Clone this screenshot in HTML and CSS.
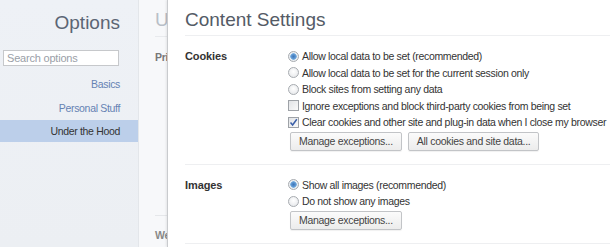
FILE: index.html
```html
<!DOCTYPE html>
<html>
<head>
<meta charset="utf-8">
<link rel="stylesheet" href="styles.css">
</head>
<body>
<div class="sidebar">
  <h1 class="side-title">Options</h1>
  <div class="search"><input class="search-input" type="text" placeholder="Search options"></div>
  <ul class="nav">
    <li class="nav-item">Basics</li>
    <li class="nav-item">Personal Stuff</li>
    <li class="nav-item selected">Under the Hood</li>
  </ul>
</div>
<div class="page">
  <div class="behind">
    <h2 class="behind-title">Under the Hood</h2>
    <div class="behind-label">Privacy</div>
    <div class="behind-spacer"></div>
    <div class="behind-label bottom">Web Content</div>
  </div>
  <div class="overlay">
    <h2 class="title">Content Settings</h2>
    <section class="section">
      <div class="label">Cookies</div>
      <div class="options">
        <label class="opt"><span class="radio checked"></span>Allow local data to be set (recommended)</label>
        <label class="opt"><span class="radio"></span>Allow local data to be set for the current session only</label>
        <label class="opt"><span class="radio"></span>Block sites from setting any data</label>
        <label class="opt"><span class="check"></span>Ignore exceptions and block third-party cookies from being set</label>
        <label class="opt"><span class="check checked"><svg viewBox="0 0 9 9" width="9" height="9"><path d="M1.5 4.5 L3.6 7 L7.8 1.2" fill="none" stroke="#3b5fa8" stroke-width="1.5"/></svg></span>Clear cookies and other site and plug-in data when I close my browser</label>
        <div class="buttons">
          <button class="btn">Manage exceptions...</button>
          <button class="btn">All cookies and site data...</button>
        </div>
      </div>
    </section>
    <section class="section">
      <div class="label">Images</div>
      <div class="options">
        <label class="opt"><span class="radio checked"></span>Show all images (recommended)</label>
        <label class="opt"><span class="radio"></span>Do not show any images</label>
        <div class="buttons">
          <button class="btn">Manage exceptions...</button>
        </div>
      </div>
    </section>
  </div>
</div>
</body>
</html>
```
FILE: styles.css
```css
html, body {
  margin: 0;
  padding: 0;
}
body {
  width: 610px;
  height: 247px;
  overflow: hidden;
  display: flex;
  font-family: "Liberation Sans", Arial, sans-serif;
  font-size: 10.5px;
  letter-spacing: -0.33px;
  color: #333;
  background: #fff;
}
.sidebar {
  width: 139px;
  flex: none;
  background: linear-gradient(to bottom, #eef1f6, #eceff3);
  border-right: 1px solid #e3e6ea;
  box-sizing: border-box;
}
.side-title {
  margin: 10px 18px 0 0;
  text-align: right;
  font-weight: normal;
  font-size: 19px;
  letter-spacing: 0;
  color: #5b6574;
  line-height: 26px;
}
.search {
  padding: 14px 19px 0 3px;
}
.search-input {
  display: block;
  width: 100%;
  box-sizing: border-box;
  height: 16px;
  border: 1px solid #c6c8cb;
  background: #fff;
  padding: 0 3px;
  font-family: inherit;
  font-size: 11px;
  letter-spacing: -0.2px;
  color: #333;
  outline: none;
}
.search-input::placeholder {
  color: #9aa0a8;
}
.nav {
  list-style: none;
  margin: 6px 0 0;
  padding: 0;
}
.nav-item {
  height: 24px;
  line-height: 24px;
  text-align: right;
  padding-right: 18px;
  color: #6582b3;
}
.nav-item.selected {
  background: #bccfea;
  color: #333;
  height: 22px;
  line-height: 22px;
}
.page {
  flex: 1;
  display: flex;
  background: #f7f8fa;
  min-width: 0;
}
.behind {
  width: 28px;
  flex: none;
  overflow: hidden;
  padding-left: 16px;
  display: flex;
  flex-direction: column;
  box-sizing: border-box;
}
.behind-title {
  margin: 7px 0 0;
  font-weight: normal;
  font-size: 19px;
  letter-spacing: 0;
  color: #b9bfc7;
  line-height: 26px;
  padding-bottom: 3px;
  border-bottom: 1px solid #e8eaed;
  white-space: nowrap;
}
.behind-label {
  margin-top: 14px;
  font-weight: bold;
  color: #777;
  white-space: nowrap;
}
.behind-spacer {
  flex: 1;
  border-bottom: 1px solid #e5e7ea;
}
.behind-label.bottom {
  margin: 13px 0 6px;
  color: #888;
}
.overlay {
  flex: 1;
  min-width: 0;
  background: #fff;
  border-left: 1px solid #c9cbce;
  box-shadow: -1px 0 2px rgba(0,0,0,0.08);
  padding-left: 17px;
}
.title {
  margin: 0;
  padding-top: 8px;
  height: 27px;
  font-weight: normal;
  font-size: 19px;
  letter-spacing: 0;
  line-height: 24px;
  color: #545b66;
  border-bottom: 1px solid #eeeff1;
}
.section {
  display: flex;
  padding: 12px 0 13px;
  border-bottom: 1px solid #eeeff1;
}
.label {
  width: 103px;
  flex: none;
  font-weight: bold;
  font-size: 11px;
  letter-spacing: -0.1px;
  color: #333;
  line-height: 15px;
  padding-top: 1px;
}
.options {
  display: flex;
  flex-direction: column;
}
.opt {
  display: flex;
  align-items: center;
  height: 16.5px;
  white-space: nowrap;
  color: #333;
}
.radio, .check {
  width: 11px;
  height: 11px;
  box-sizing: border-box;
  margin-right: 3px;
  flex: none;
}
.radio {
  border-radius: 50%;
  border: 1px solid #a7abb0;
  background: radial-gradient(circle at 50% 40%, #ffffff, #e2e4e7);
}
.radio.checked {
  background: radial-gradient(circle at 50% 50%, #3f76b8 0, #5a93cf 2px, #7fb2e0 3px, #eef1f4 3.5px, #e2e4e7 100%);
}
.check {
  border: 1px solid #9ea2a7;
  background: linear-gradient(135deg, #e1e3e6, #fafafa);
  display: flex;
  align-items: center;
  justify-content: center;
}
.check svg {
  display: block;
}
.buttons {
  display: flex;
  gap: 6px;
  margin-top: 1px;
  padding-left: 2px;
}
.btn {
  height: 19px;
  padding: 0 8px;
  border: 1px solid #c2c4c7;
  border-radius: 2px;
  background: linear-gradient(to bottom, #fbfbfb, #ececec);
  font-family: inherit;
  font-size: 10.5px;
  letter-spacing: -0.3px;
  color: #444;
  box-shadow: 0 1px 1px rgba(0,0,0,0.06);
}
```
